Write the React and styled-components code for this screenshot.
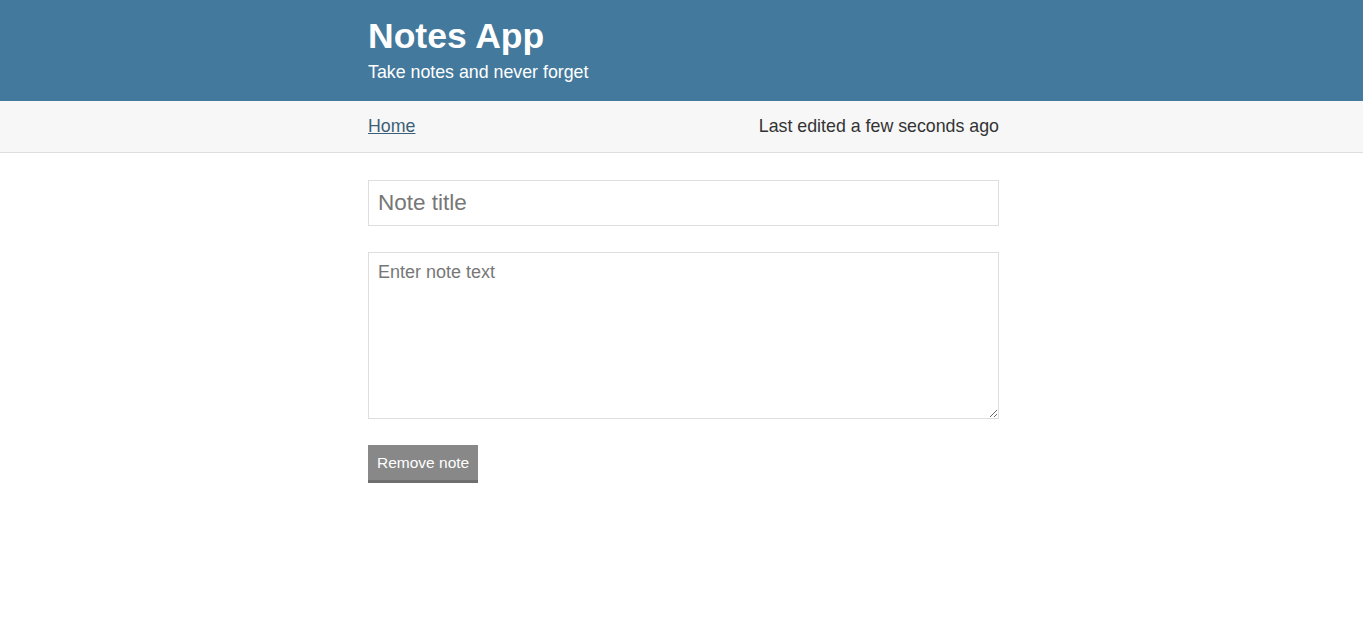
import styled, { createGlobalStyle } from "styled-components";

const GlobalStyle = createGlobalStyle`
  * { box-sizing: border-box; }
  body {
    margin: 0;
    font-family: "Liberation Sans", Arial, sans-serif;
    color: #333333;
    background: #ffffff;
  }
`;

const Container = styled.div`
  width: 631px;
  margin-left: calc(50% - 313.5px);
`;

const Header = styled.header`
  background: #43799c;
  color: #ffffff;
  height: 101px;
  padding-top: 15px;
`;

const Title = styled.h1`
  margin: 0;
  font-size: 35.5px;
  font-weight: 700;
  line-height: 1.2;
`;

const Subtitle = styled.h2`
  margin: 3px 0 0;
  font-size: 17.8px;
  font-weight: 400;
  line-height: 1.3;
`;

const ActionsBar = styled.div`
  background: #f7f7f7;
  border-bottom: 1px solid #dedede;
  height: 52px;
`;

const ActionsRow = styled(Container)`
  display: flex;
  justify-content: space-between;
  align-items: center;
  height: 100%;
  font-size: 17.8px;
`;

const NavLink = styled.a`
  color: #3d5f78;
  text-decoration: underline;
`;

const Edited = styled.span`
  color: #333333;
`;

const Form = styled(Container)`
  display: flex;
  flex-direction: column;
  align-items: flex-start;
  padding-top: 27px;
`;

const TitleInput = styled.input`
  width: 100%;
  height: 46px;
  border: 1px solid #dedede;
  padding: 0 9px;
  font-family: inherit;
  font-size: 22.5px;
  color: #333333;
  margin-bottom: 26px;
  &::placeholder { color: #777777; }
`;

const BodyText = styled.textarea`
  width: 100%;
  height: 167px;
  border: 1px solid #dedede;
  padding: 9px 9px;
  font-family: inherit;
  font-size: 18px;
  color: #333333;
  margin: 0 0 26px;
  &::placeholder { color: #777777; }
`;

const Button = styled.button`
  background: #888888;
  color: #ffffff;
  border: none;
  border-bottom: 3px solid #6f6f6f;
  font-family: inherit;
  font-size: 15.5px;
  height: 38px;
  padding: 0 9px;
  white-space: nowrap;
  cursor: pointer;
`;

export default function App() {
  return (
    <>
      <GlobalStyle />
      <Header>
        <Container>
          <Title>Notes App</Title>
          <Subtitle>Take notes and never forget</Subtitle>
        </Container>
      </Header>
      <ActionsBar>
        <ActionsRow>
          <NavLink href="#">Home</NavLink>
          <Edited>Last edited a few seconds ago</Edited>
        </ActionsRow>
      </ActionsBar>
      <Form as="form" onSubmit={(e) => e.preventDefault()}>
        <TitleInput placeholder="Note title" />
        <BodyText placeholder="Enter note text" />
        <Button type="button">Remove note</Button>
      </Form>
    </>
  );
}
